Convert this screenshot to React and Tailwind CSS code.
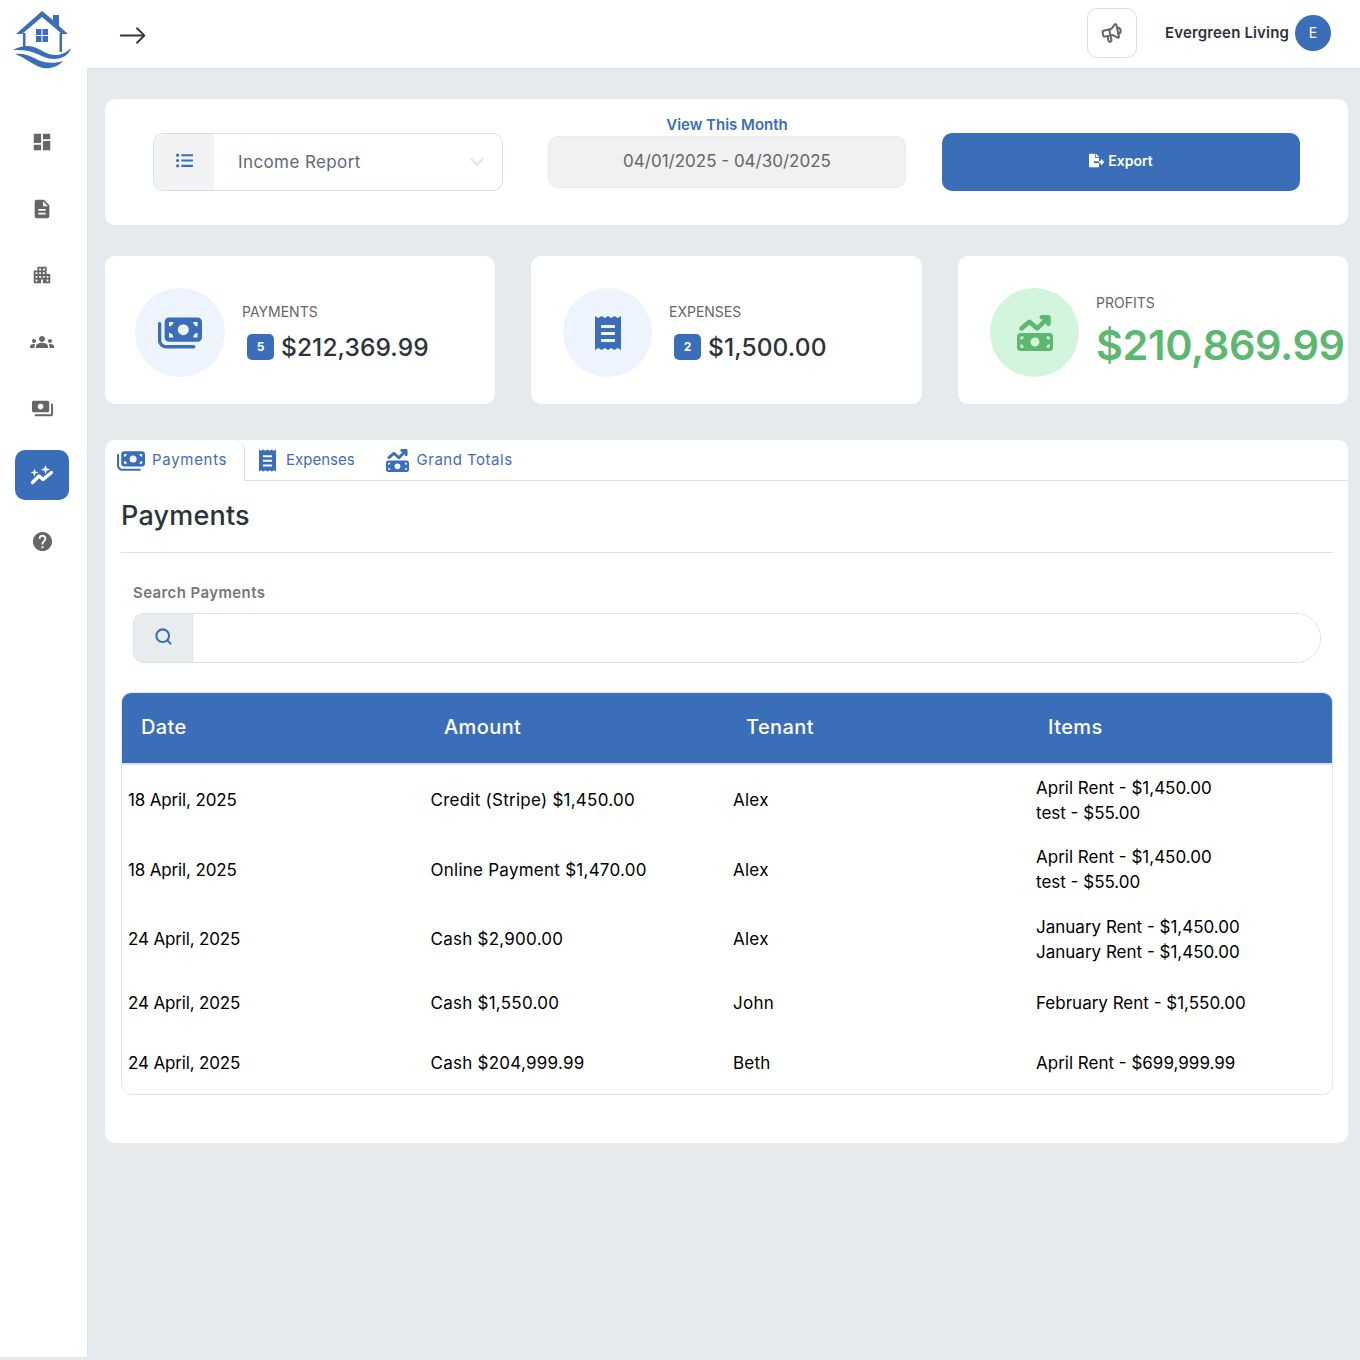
import React from "react";
import { BsArrowRight } from "react-icons/bs";
import { FaChevronDown, FaListUl, FaFileExport } from "react-icons/fa";
import { FaMoneyBills, FaMoneyBillTrendUp } from "react-icons/fa6";
import { FiSearch } from "react-icons/fi";
import { MdApartment, MdDashboard, MdDescription, MdGroups, MdHelp, MdPayments } from "react-icons/md";
import { TbSpeakerphone } from "react-icons/tb";

function GraphIcon({ className }) {
  return (
    <svg viewBox="0 0 24 20" className={className} fill="currentColor">
      <path d="M2.500 17.500 L9 11 L13 14.500 L21.500 7.500" fill="none" stroke="currentColor" strokeWidth="3.400" strokeLinecap="round" strokeLinejoin="round" />
      <path d="M4.500 3.500 L5.500 6.500 L8.500 7.500 L5.500 8.500 L4.500 11.500 L3.500 8.500 L0.500 7.500 L3.500 6.500 Z" />
      <path d="M15.500 0 L16.700 3.300 L20 4.500 L16.700 5.700 L15.500 9 L14.300 5.700 L11 4.500 L14.300 3.300 Z" />
    </svg>
  );
}

function ReceiptIcon({ className }) {
  return (
    <svg viewBox="0 0 26 34" className={className}>
      <path
        fill="#3a6eb8"
        fillRule="evenodd"
        d="M0 0 L3.250 2 L6.500 0 L9.750 2 L13 0 L16.250 2 L19.500 0 L22.750 2 L26 0 V34 L22.750 32 L19.500 34 L16.250 32 L13 34 L9.750 32 L6.500 34 L3.250 32 L0 34 Z M6 9 V12 H20 V9 Z M6 16 V19 H20 V16 Z M6 23 V26 H20 V23 Z"
      />
    </svg>
  );
}

const navItems = [
  { icon: MdDashboard, size: "text-[22px]" },
  { icon: MdDescription, size: "text-[22px]" },
  { icon: MdApartment, size: "text-[22px]" },
  { icon: MdGroups, size: "text-[24px]" },
  { icon: MdPayments, size: "text-[23px]" },
  { icon: GraphIcon, size: "w-[24px] h-[20px]", active: true },
  { icon: MdHelp, size: "text-[23px]" },
];

const rows = [
  { date: "18 April, 2025", amount: "Credit (Stripe) $1,450.00", tenant: "Alex", items: ["April Rent - $1,450.00", "test - $55.00"] },
  { date: "18 April, 2025", amount: "Online Payment $1,470.00", tenant: "Alex", items: ["April Rent - $1,450.00", "test - $55.00"] },
  { date: "24 April, 2025", amount: "Cash $2,900.00", tenant: "Alex", items: ["January Rent - $1,450.00", "January Rent - $1,450.00"] },
  { date: "24 April, 2025", amount: "Cash $1,550.00", tenant: "John", items: ["February Rent - $1,550.00"] },
  { date: "24 April, 2025", amount: "Cash $204,999.99", tenant: "Beth", items: ["April Rent - $699,999.99"] },
];

function Logo() {
  return (
    <svg viewBox="0 0 60 62" className="w-[60px] h-[62px]" fill="#3a6eb8">
      <path d="M30 2 L4 25 H10 L30 8 L50 25 H56 L47 17 V6 H41 V11 Z" />
      <path d="M11 24 h2.500 v16 h-2.500z M47.500 24 h2.500 v19 h-2.500z" />
      <path d="M24 20h5.500v6h-5.500z M30.500 20h5.500v6h-5.500z M24 27h5.500v6h-5.500z M30.500 27h5.500v6h-5.500z" />
      <path d="M1 41 C8 37 16 36 22 38 C30 41 35 46 44 46 C50 46 55 43 59 39 C57 46 50 50 42 50 C33 50 27 45 20 43 C13 41 7 41 1 41 Z" />
      <path d="M3 45 C10 44 17 46 24 50 C31 54 42 55 51 52 C46 58 38 60 31 59 C22 57 14 49 3 45 Z" />
    </svg>
  );
}

function StatCard({ icon, inset, circle, label, badge, value }) {
  return (
    <div className={`bg-white rounded-[10px] h-[148px] flex items-center ${inset}`}>
      <div className={`mt-[5px] h-[89px] rounded-full bg-[#edf4fe] flex items-center justify-center shrink-0 ${circle}`}>
        {icon}
      </div>
      <div className="ml-[17px] mt-[4px]">
        <div className="text-[14px] leading-5 text-[#666]">{label}</div>
        <div className="flex items-center ml-[5px] mt-[9px]">
          <span className="w-[27px] h-[26px] rounded-[5px] bg-[#3a6eb8] text-white text-[12px] font-bold flex items-center justify-center">{badge}</span>
          <span className="ml-[7px] text-[24.500px] leading-8 font-medium text-[#2c333a] tracking-[0.1px]">{value}</span>
        </div>
      </div>
    </div>
  );
}

export default function App() {
  return (
    <div className="min-h-[1360px] flex bg-[#e6eaed] text-[#000] font-['Inter','Liberation_Sans',sans-serif]">
      {/* sidebar */}
      <aside className="w-[88px] h-[1357px] bg-white shrink-0 flex flex-col">
        <div className="h-[69px] pt-[9px] pl-[12px]">
          <Logo />
        </div>
        <nav className="flex-1 border-r border-[#dfe3e8] pt-[48px] pl-[15px] flex flex-col gap-[16.500px]">
          {navItems.map((item, i) => {
            const Icon = item.icon;
            return (
              <div
                key={i}
                className={`w-[54px] h-[50px] rounded-[10px] flex items-center justify-center ${item.active ? "bg-[#3a6eb8] text-white" : "text-[#666]"}`}
              >
                <Icon className={item.size} />
              </div>
            );
          })}
        </nav>
      </aside>

      <div className="flex-1 min-w-0">
        {/* top bar */}
        <header className="h-[69px] bg-white border-b border-[#d8dde3] flex items-center pl-[30px] pr-[29px]">
          <BsArrowRight className="text-[29px] text-[#333] mt-[3px]" />
          <div className="ml-auto w-[50px] h-[50px] -mt-[3px] rounded-[10px] border border-[#ddd] flex items-center justify-center">
            <TbSpeakerphone className="text-[24px] text-[#666] -rotate-12" />
          </div>
          <span className="ml-[28px] -mt-[1px] text-[15px] font-semibold text-[#2c333a] tracking-[0.15px]">Evergreen Living</span>
          <span className="ml-[6px] -mt-[3px] w-9 h-9 rounded-full bg-[#3a6eb8] text-white text-sm flex items-center justify-center">E</span>
        </header>

        <main className="pl-[17px] pr-[12px] pt-[30px]">
          {/* report filters */}
          <section className="bg-white rounded-[10px] h-[126px] pl-[48px] pt-[16px] flex items-start">
            <div className="mt-[18px] w-[350px] h-[58px] rounded-[10px] border border-[#d5dfea] flex overflow-hidden">
              <div className="w-[60px] bg-[#f1f2f3] flex items-center justify-center">
                <FaListUl className="text-[17px] text-[#3a6eb8] -mt-[3px]" />
              </div>
              <div className="flex-1 flex items-center pl-[24px] pr-[17px] text-[17px] tracking-[0.4px] text-[#5f6878]">
                <span className="mt-[1px]">Income Report</span>
                <FaChevronDown className="ml-auto text-[16px] text-[#e8e8e8]" />
              </div>
            </div>
            <div className="ml-[45px] w-[358px]">
              <div className="h-[21px] leading-5 text-center text-[15px] font-semibold text-[#3a6eb8]">View This Month</div>
              <div className="h-[52px] rounded-[10px] bg-[#f1f1f1] border border-[#ebebeb] flex items-center justify-center text-[17px] text-[#666]">
                04/01/2025 - 04/30/2025
              </div>
            </div>
            <button className="mt-[18px] ml-[36px] w-[358px] h-[58px] pb-[3px] rounded-[10px] bg-[#3a6eb8] text-white text-[14px] font-semibold flex items-center justify-center gap-[4px]">
              <FaFileExport className="text-[15px]" />
              Export
            </button>
          </section>

          {/* totals */}
          <section className="mt-[31px] grid grid-cols-[390px_391px_390px] gap-x-[36px]">
            <StatCard
              icon={<FaMoneyBills className="text-[44px] text-[#3a6eb8]" />}
              inset="pl-[30px]"
              circle="w-[90px]"
              label="PAYMENTS"
              badge="5"
              value="$212,369.99"
            />
            <StatCard
              icon={<ReceiptIcon className="w-[26px] h-[34px]" />}
              inset="pl-[32px]"
              circle="w-[89px]"
              label="EXPENSES"
              badge="2"
              value="$1,500.00"
            />
            <div className="bg-white rounded-[10px] h-[148px] flex items-center pl-[32px] overflow-hidden">
              <div className="mt-[5px] w-[89px] h-[89px] rounded-full bg-[#d3f5de] flex items-center justify-center shrink-0">
                <FaMoneyBillTrendUp className="text-[36px] text-[#5cb76f]" />
              </div>
              <div className="ml-[17px] mt-[4px]">
                <div className="text-[14px] leading-5 text-[#666]">PROFITS</div>
                <div className="text-[41.500px] leading-[54px] font-semibold text-[#5cb76f] mt-[5px] whitespace-nowrap tracking-[-0.4px]">$210,869.99</div>
              </div>
            </div>
          </section>

          {/* payments panel */}
          <section className="mt-[36px] bg-white rounded-[10px] h-[703px]">
            <div className="h-[41px] flex border-b border-[#dee2e6] text-[15px] text-[#3f6db5]">
              <div className="w-[140px] h-[41px] pl-[12px] flex items-center gap-[7px] tracking-[0.7px] bg-white rounded-tl-[10px] rounded-tr-[10px] border-r border-[#dee2e6]">
                <FaMoneyBills className="text-[28px] text-[#3a6eb8]" />
                Payments
              </div>
              <div className="ml-[14px] flex items-center gap-[10px]">
                <ReceiptIcon className="w-[17px] h-[23px]" />
                Expenses
              </div>
              <div className="ml-[31px] flex items-center gap-[8px] tracking-[0.5px]">
                <FaMoneyBillTrendUp className="text-[23px] text-[#3a6eb8]" />
                Grand Totals
              </div>
            </div>

            <div className="pl-[16px] pr-[15px]">
              <h2 className="mt-[17px] text-[27px] leading-[36px] font-medium text-[#2c333a] tracking-[0.2px]">Payments</h2>
              <hr className="mt-[18px] border-[#dee2e6]" />

              <div className="mt-[30px] px-[12px]">
                <label className="block text-[15px] leading-5 font-semibold text-[#777] tracking-[0.4px]">Search Payments</label>
                <div className="mt-[10px] h-[50px] flex rounded-l-[10px] rounded-r-[25px] border border-[#dee2e6] overflow-hidden">
                  <div className="w-[59px] bg-[#e9ecef] border-r border-[#dee2e6] flex items-center justify-center">
                    <FiSearch className="text-[19px] text-[#3a6eb8] -mt-[3px] [stroke-width:2.600]" />
                  </div>
                  <input className="flex-1 outline-none bg-white" />
                </div>
              </div>

              {/* table */}
              <div className="mt-[29px] rounded-[10px] border border-[#e3e6ea] overflow-hidden">
                <div className="h-[72px] grid grid-cols-[303px_302px_302px_1fr] items-center bg-[#3a6eb8] border-b-[2px] border-[#dee2e6] pl-[19px] pb-[3px] text-white text-[20px] font-medium tracking-[0.4px]">
                  <div>Date</div>
                  <div>Amount</div>
                  <div>Tenant</div>
                  <div>Items</div>
                </div>
                {rows.map((row, i) => (
                  <div
                    key={i}
                    className={`grid grid-cols-[302.500px_302.500px_303px_1fr] items-center pl-[6px] text-[17px] leading-[25px] ${row.items.length > 1 ? "h-[69.500px] pt-[2px]" : "h-[60px]"}`}
                  >
                    <div className="tracking-[-0.15px]">{row.date}</div>
                    <div className="tracking-[0.25px]">{row.amount}</div>
                    <div className="tracking-[0.25px]">{row.tenant}</div>
                    <div>
                      {row.items.map((item, j) => (
                        <div key={j}>{item}</div>
                      ))}
                    </div>
                  </div>
                ))}
              </div>
            </div>
          </section>
        </main>
      </div>
    </div>
  );
}
